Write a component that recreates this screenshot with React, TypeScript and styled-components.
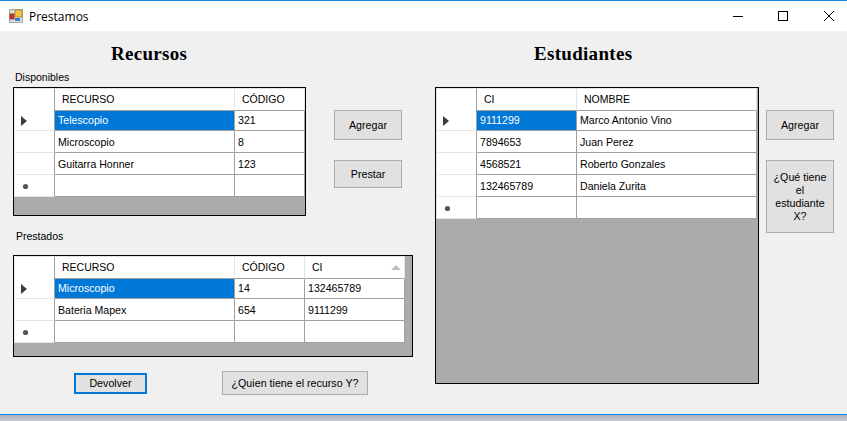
import styled, { createGlobalStyle } from 'styled-components';

const GlobalStyle = createGlobalStyle`
  html, body {
    margin: 0;
    padding: 0;
    background: #ffffff;
  }
  * {
    box-sizing: border-box;
  }
`;

const Window = styled.div`
  width: 847px;
  height: 421px;
  display: flex;
  flex-direction: column;
  overflow: hidden;
  font-family: 'Liberation Sans', Arial, sans-serif;
  font-size: 11px;
  color: #000;
`;

const TitleBar = styled.div`
  height: 31px;
  flex: none;
  display: flex;
  align-items: center;
  background: #fff;
  border-top: 1px solid #0a84e0;
  padding-left: 9px;
`;

const AppTitle = styled.span`
  font-family: 'Open Sans', sans-serif;
  font-size: 12px;
  margin-left: 6px;
  flex: 1;
`;

const Controls = styled.div`
  display: flex;
  height: 100%;
  margin-right: -4px;
`;

const ControlButton = styled.div`
  width: 45px;
  display: flex;
  align-items: center;
  justify-content: center;
  &:last-child {
    margin-left: 1px;
  }
`;

const Client = styled.div`
  height: 383px;
  flex: none;
  display: flex;
  background: #f0f0f0;
  padding-left: 13px;
`;

const Pane = styled.div<{ $width: number }>`
  width: ${({ $width }) => $width}px;
  flex: none;
`;

const TopRow = styled.div`
  display: flex;
`;

const Column = styled.div<{ $width: number }>`
  width: ${({ $width }) => $width}px;
  flex: none;
`;

const Heading = styled.h2<{ $indent: number; $height: number }>`
  margin: 0;
  height: ${({ $height }) => $height}px;
  padding: 12px 0 0 ${({ $indent }) => $indent}px;
  font-family: 'Liberation Serif', serif;
  font-size: 19px;
  line-height: 22px;
  font-weight: 700;
  letter-spacing: 0.3px;
  white-space: nowrap;
`;

const Caption = styled.div<{ $indent: number; $top: number; $height: number }>`
  margin-top: ${({ $top }) => $top}px;
  height: ${({ $height }) => $height}px;
  padding-left: ${({ $indent }) => $indent}px;
  font-size: 10.5px;
  line-height: 16px;
`;

const GridFrame = styled.div<{ $width: number; $height: number }>`
  width: ${({ $width }) => $width}px;
  height: ${({ $height }) => $height}px;
  border: 1px solid #000;
  background: #ababab;
  overflow: hidden;
`;

const GridRow = styled.div<{ $columns: string }>`
  display: grid;
  grid-template-columns: ${({ $columns }) => $columns};
  height: 22px;
`;

const HeaderRow = styled(GridRow)`
  height: 21px;
`;

const RowHead = styled.div`
  background: #fff;
  border-left: 1px solid #e4e4e4;
  border-bottom: 1px solid #e4e4e4;
  border-right: 1px solid #a0a0a0;
  display: flex;
  align-items: center;
  padding: 2px 0 0 6px;
`;

const HeaderCorner = styled(RowHead)`
  border-top: 1px solid #e4e4e4;
  border-bottom: 1px solid #a0a0a0;
`;

const HeaderCell = styled.div`
  position: relative;
  background: #fff;
  border-top: 1px solid #e4e4e4;
  border-right: 1px solid #e4e4e4;
  border-bottom: 1px solid #a0a0a0;
  padding-left: 7px;
  font-size: 10.5px;
  line-height: 21px;
  white-space: nowrap;
`;

const Cell = styled.div<{ $selected?: boolean }>`
  background: ${({ $selected }) => ($selected ? '#0078d7' : '#fff')};
  color: ${({ $selected }) => ($selected ? '#fff' : '#000')};
  border-right: 1px solid #a0a0a0;
  border-bottom: 1px solid #a0a0a0;
  padding-left: 3px;
  font-size: 10.6px;
  line-height: 23px;
  white-space: nowrap;
  overflow: hidden;
`;

const SortMark = styled.svg`
  position: absolute;
  right: 3px;
  top: 8px;
`;

const ActionColumn = styled.div<{ $left: number }>`
  width: 68px;
  flex: none;
  margin-left: ${({ $left }) => $left}px;
  padding-top: 79px;
  display: flex;
  flex-direction: column;
  gap: 20px;
`;

const ActionButton = styled.button<{ $height: number; $focused?: boolean; $width?: number }>`
  width: ${({ $width }) => ($width ? `${$width}px` : '100%')};
  height: ${({ $height }) => $height}px;
  padding: 0 2px;
  background: #e1e1e1;
  border: ${({ $focused }) => ($focused ? '2px solid #0078d7' : '1px solid #adadad')};
  font-family: 'Liberation Sans', Arial, sans-serif;
  font-size: 10.7px;
  line-height: 13px;
  color: #000;
  white-space: pre-line;
`;

const BottomRow = styled.div`
  display: flex;
  align-items: center;
  height: 24px;
  margin-top: 14px;
  padding-left: 61px;
  gap: 75px;
`;

const BottomEdge = styled.div`
  flex: 1;
  border-top: 1px solid #0a84e0;
  background: linear-gradient(#a9b1bb, #c6cbd2);
`;

const RowArrow = () => (
  <svg width="6" height="10" viewBox="0 0 6 10">
    <path d="M0 0 L6 5 L0 10 Z" fill="#3c3c3c" />
  </svg>
);

const NewRowMark = () => (
  <svg width="8" height="7" viewBox="0 0 8 7">
    <circle cx="4.5" cy="3.5" r="2.6" fill="#555" />
  </svg>
);

const WindowIcon = () => (
  <svg width="14" height="14" viewBox="0 0 14 14">
    <rect x="0.5" y="0.5" width="13" height="13" fill="#dcdcdc" stroke="#a8a8a8" />
    <rect x="6" y="1" width="7" height="7" fill="#f4c33a" stroke="#a8842a" strokeWidth="0.8" />
    <rect x="1" y="5" width="4" height="5" fill="#d8332a" stroke="#8a2a22" strokeWidth="0.8" />
    <rect x="6" y="9" width="5" height="3" fill="#3b78d8" />
  </svg>
);

interface DataGridProps {
  width: number;
  height: number;
  columns: number[];
  headers: string[];
  rows: string[][];
  sorted?: boolean;
}

const DataGrid = ({ width, height, columns, headers, rows, sorted }: DataGridProps) => {
  const template = [41, ...columns].map((c) => `${c}px`).join(' ');
  return (
    <GridFrame $width={width} $height={height}>
      <HeaderRow $columns={template}>
        <HeaderCorner />
        {headers.map((h, i) => (
          <HeaderCell key={h}>
            {h}
            {sorted && i === headers.length - 1 && (
              <SortMark width="10" height="5" viewBox="0 0 10 5">
                <path d="M5 0 L10 5 L0 5 Z" fill="#bcbcbc" />
              </SortMark>
            )}
          </HeaderCell>
        ))}
      </HeaderRow>
      {rows.map((row, r) => (
        <GridRow $columns={template} key={row[0]}>
          <RowHead>{r === 0 && <RowArrow />}</RowHead>
          {row.map((value, c) => (
            <Cell key={c} $selected={r === 0 && c === 0}>
              {value}
            </Cell>
          ))}
        </GridRow>
      ))}
      <GridRow $columns={template}>
        <RowHead>
          <NewRowMark />
        </RowHead>
        {columns.map((c, i) => (
          <Cell key={i} />
        ))}
      </GridRow>
    </GridFrame>
  );
};

export default function App() {
  return (
    <Window>
      <GlobalStyle />
      <TitleBar>
        <WindowIcon />
        <AppTitle>Prestamos</AppTitle>
        <Controls>
          <ControlButton>
            <svg width="10" height="10" viewBox="0 0 10 10">
              <path d="M0 5.5 H10" stroke="#000" />
            </svg>
          </ControlButton>
          <ControlButton>
            <svg width="10" height="10" viewBox="0 0 10 10">
              <rect x="0.5" y="0.5" width="9" height="9" fill="none" stroke="#000" />
            </svg>
          </ControlButton>
          <ControlButton>
            <svg width="10" height="10" viewBox="0 0 10 10">
              <path d="M0 0 L10 10 M10 0 L0 10" stroke="#000" />
            </svg>
          </ControlButton>
        </Controls>
      </TitleBar>
      <Client>
        <Pane $width={422}>
          <TopRow>
            <Column $width={293}>
              <Heading $indent={98} $height={38}>
                Recursos
              </Heading>
              <Caption $indent={2} $top={0} $height={18}>
                Disponibles
              </Caption>
              <DataGrid
                width={293}
                height={129}
                columns={[180, 70]}
                headers={['RECURSO', 'CÓDIGO']}
                rows={[
                  ['Telescopio', '321'],
                  ['Microscopio', '8'],
                  ['Guitarra Honner', '123'],
                ]}
              />
            </Column>
            <ActionColumn $left={28}>
              <ActionButton $height={30}>Agregar</ActionButton>
              <ActionButton $height={28}>Prestar</ActionButton>
            </ActionColumn>
          </TopRow>
          <Caption $indent={3} $top={12} $height={27}>
            Prestados
          </Caption>
          <DataGrid
            width={400}
            height={102}
            columns={[180, 70, 100]}
            headers={['RECURSO', 'CÓDIGO', 'CI']}
            rows={[
              ['Microscopio', '14', '132465789'],
              ['Bateria Mapex', '654', '9111299'],
            ]}
            sorted
          />
          <BottomRow>
            <ActionButton $height={21} $width={73} $focused>
              Devolver
            </ActionButton>
            <ActionButton $height={24} $width={146}>
              ¿Quien tiene el recurso Y?
            </ActionButton>
          </BottomRow>
        </Pane>
        <TopRow>
          <Column $width={324}>
            <Heading $indent={99} $height={56}>
              Estudiantes
            </Heading>
            <DataGrid
              width={324}
              height={297}
              columns={[100, 180]}
              headers={['CI', 'NOMBRE']}
              rows={[
                ['9111299', 'Marco Antonio Vino'],
                ['7894653', 'Juan Perez'],
                ['4568521', 'Roberto Gonzales'],
                ['132465789', 'Daniela Zurita'],
              ]}
            />
          </Column>
          <ActionColumn $left={7}>
            <ActionButton $height={30}>Agregar</ActionButton>
            <ActionButton $height={73}>{'¿Qué tiene\nel\nestudiante\nX?'}</ActionButton>
          </ActionColumn>
        </TopRow>
      </Client>
      <BottomEdge />
    </Window>
  );
}
